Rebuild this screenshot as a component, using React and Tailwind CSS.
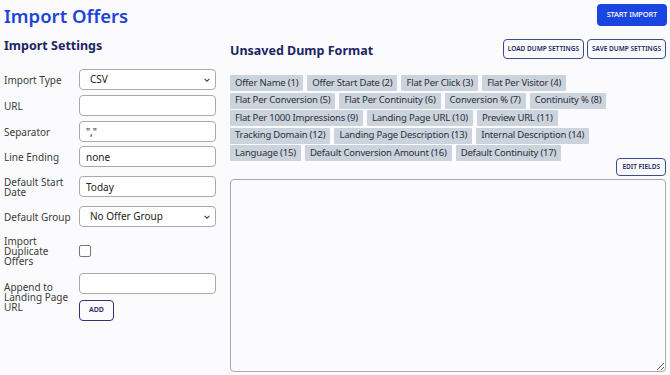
import { useState } from "react";

const fields = [
  "Offer Name (1)",
  "Offer Start Date (2)",
  "Flat Per Click (3)",
  "Flat Per Visitor (4)",
  "Flat Per Conversion (5)",
  "Flat Per Continuity (6)",
  "Conversion % (7)",
  "Continuity % (8)",
  "Flat Per 1000 Impressions (9)",
  "Landing Page URL (10)",
  "Preview URL (11)",
  "Tracking Domain (12)",
  "Landing Page Description (13)",
  "Internal Description (14)",
  "Language (15)",
  "Default Conversion Amount (16)",
  "Default Continuity (17)",
];

function Row({ label, children, className = "" }) {
  return (
    <div className={`flex items-center ${className}`}>
      <label className="w-[75px] pr-[8px] text-[10px] leading-[10px] text-[#3a3a3a]">{label}</label>
      <div className="w-[137px]">{children}</div>
    </div>
  );
}

const inputCls =
  "block w-full h-[21px] px-[6px] border border-[#aaa] rounded-[4px] bg-white text-[10px] text-[#222] outline-none";

function Chevron() {
  return (
    <svg width="8" height="8" viewBox="0 0 10 10" className="absolute right-[5px] top-[7px]">
      <path d="M2 3.5 L5 6.5 L8 3.5" fill="none" stroke="#444" strokeWidth="1.4" />
    </svg>
  );
}

export default function App() {
  const [form, setForm] = useState({
    url: "",
    separator: '","',
    lineEnding: "none",
    startDate: "Today",
    append: "",
  });

  const handleChange = (e) => {
    setForm({ ...form, [e.target.name]: e.target.value });
  };

  return (
    <div className="w-[670px] h-[375px] overflow-hidden bg-[#fbfbfd] font-['Noto_Sans',sans-serif]">
      <div className="flex items-start justify-between pl-[4px] pr-[3px] pt-[4px]">
        <h1 className="text-[18.5px] leading-[24px] font-semibold text-[#1d44d4]">Import Offers</h1>
        <button className="h-[22px] px-[10px] rounded-[4px] bg-[#1a45e0] text-white text-[7.5px] font-medium tracking-tight">
          START IMPORT
        </button>
      </div>

      <div className="flex">
        {/* left settings */}
        <div className="w-[226px] pl-[4px]">
          <h2 className="mt-[10px] text-[12.5px] leading-[16px] font-bold text-[#1b2563]">Import Settings</h2>
          <div className="mt-[15px] flex flex-col">
            <Row label="Import Type">
              <div className="relative">
                <div className={`${inputCls} flex items-center pl-[10px]`}>CSV</div>
                <Chevron />
              </div>
            </Row>
            <Row label="URL" className="mt-[5px]">
              <input name="url" value={form.url} onChange={handleChange} className={inputCls} />
            </Row>
            <Row label="Separator" className="mt-[5px]">
              <input name="separator" value={form.separator} onChange={handleChange} className={inputCls} />
            </Row>
            <Row label="Line Ending" className="mt-[4px]">
              <input name="lineEnding" value={form.lineEnding} onChange={handleChange} className={inputCls} />
            </Row>
            <Row label="Default Start Date" className="mt-[9px]">
              <input name="startDate" value={form.startDate} onChange={handleChange} className={inputCls} />
            </Row>
            <Row label="Default Group" className="mt-[9px]">
              <div className="relative">
                <div className={`${inputCls} flex items-center pl-[10px]`}>No Offer Group</div>
                <Chevron />
              </div>
            </Row>
            <Row label="Import Duplicate Offers" className="mt-[9px]">
              <div className="w-[12px] h-[12px] border border-[#777] rounded-[2px] bg-white" />
            </Row>
            <div className="flex mt-[7px]">
              <label className="w-[75px] pr-[8px] pt-[9px] text-[10px] leading-[10px] text-[#3a3a3a]">
                Append to Landing Page URL
              </label>
              <div className="w-[137px] flex flex-col items-start">
                <input name="append" value={form.append} onChange={handleChange} className={inputCls} />
                <button className="mt-[6px] w-[35px] h-[21px] border border-[#2a3470] rounded-[4px] text-[7px] font-semibold text-[#1b2563]">
                  ADD
                </button>
              </div>
            </div>
          </div>
        </div>

        {/* right dump format */}
        <div className="flex-1 pr-[4px] pl-[4px]">
          <div className="mt-[11px] flex items-center justify-between">
            <h2 className="mt-[3px] text-[12.5px] leading-[16px] font-bold text-[#1b2563]">Unsaved Dump Format</h2>
            <div className="flex gap-[3px]">
              <button className="h-[20px] px-[4px] border border-[#3a4a8a] rounded-[4px] text-[6.5px] font-semibold text-[#1b2563]">
                LOAD DUMP SETTINGS
              </button>
              <button className="h-[20px] px-[4px] border border-[#3a4a8a] rounded-[4px] text-[6.5px] font-semibold text-[#1b2563]">
                SAVE DUMP SETTINGS
              </button>
            </div>
          </div>
          <div className="mt-[16px] flex flex-wrap gap-x-[4px] gap-y-[1.5px] w-[390px]">
            {fields.map((f) => (
              <span
                key={f}
                className="h-[16px] px-[5px] flex items-center bg-[#cbd3dd] text-[9.5px] tracking-[-0.2px] text-[#2b2f38] rounded-[1px]"
              >
                {f}
              </span>
            ))}
          </div>
          <div className="flex justify-end mt-[-3px]">
            <button className="h-[18px] px-[5px] border border-[#3a4a8a] rounded-[4px] text-[6.5px] font-semibold text-[#1b2563]">
              EDIT FIELDS
            </button>
          </div>
          <textarea className="block mt-[3px] w-full h-[193px] border border-[#aaa] rounded-[4px] bg-[#fbfbfd] resize-y outline-none" />
        </div>
      </div>
    </div>
  );
}
